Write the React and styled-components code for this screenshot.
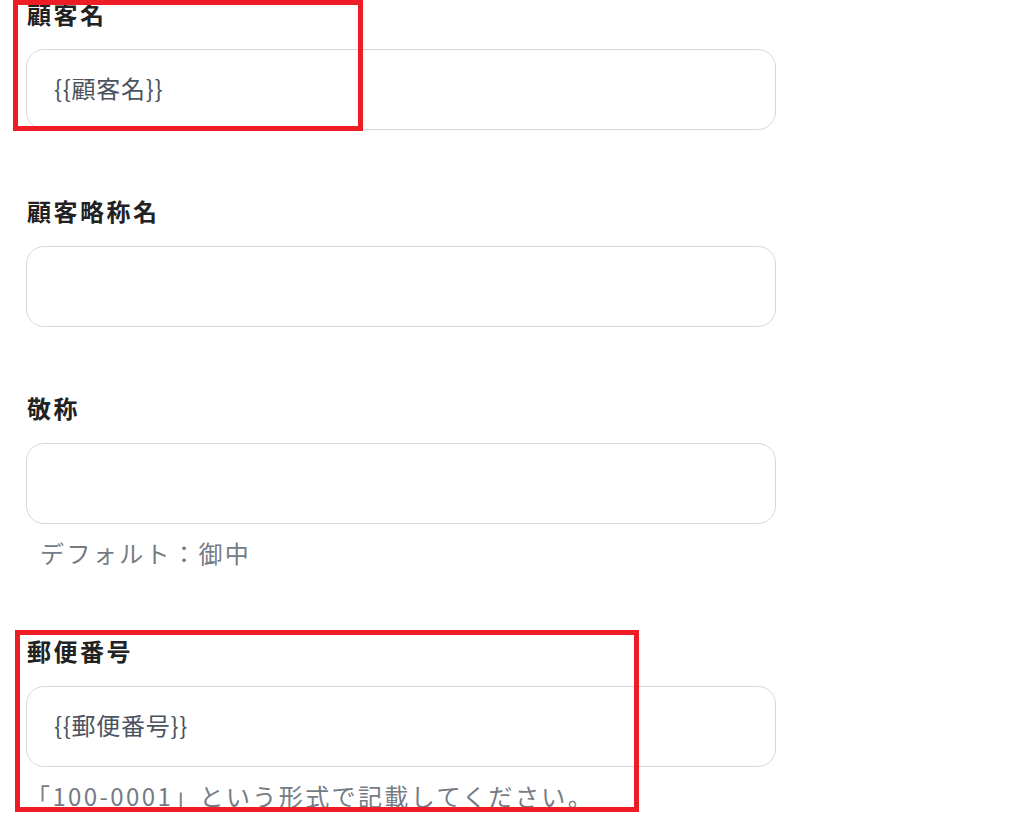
import React from 'react'
import styled, { createGlobalStyle } from 'styled-components'

const GlobalStyle = createGlobalStyle`
  html, body {
    margin: 0;
    padding: 0;
    background: #ffffff;
    overflow: hidden;
  }
  body {
    font-family: "Noto Sans CJK JP", "Noto Sans", sans-serif;
  }
`

const Page = styled.div`
  position: relative;
  width: 1029px;
  height: 814px;
  overflow: hidden;
`

const Form = styled.form`
  display: flex;
  flex-direction: column;
  gap: 64px;
  width: 750px;
  margin-top: -3px;
  padding-left: 26px;
`

const Field = styled.div`
  display: flex;
  flex-direction: column;
`

const Label = styled.label`
  font-size: 24px;
  line-height: 34px;
  font-weight: 700;
  letter-spacing: 2.5px;
  color: #222222;
  padding-left: 1px;
  margin-bottom: 18px;
`

const Input = styled.input`
  box-sizing: border-box;
  width: 750px;
  height: 81px;
  padding: 0 0 4px 27px;
  border: 1px solid #d4d7dd;
  border-radius: 18px;
  background: #ffffff;
  font-family: "Noto Sans CJK JP", "Noto Sans", sans-serif;
  font-size: 24px;
  letter-spacing: 0.7px;
  color: #4b5360;
  outline: none;
`

const Help = styled.p`
  margin: 12px 0 0;
  padding-left: ${p => p.$indent ?? 14}px;
  font-size: 24px;
  line-height: 34px;
  letter-spacing: 2.4px;
  color: #757b84;
`

const Marker = styled.div`
  position: absolute;
  box-sizing: border-box;
  border: 5px solid #ee1c25;
  pointer-events: none;
`

const fields = [
  { label: '顧客名', value: '{{顧客名}}' },
  { label: '顧客略称名', value: '' },
  { label: '敬称', value: '', help: 'デフォルト：御中' },
  { label: '郵便番号', value: '{{郵便番号}}', help: '「100-0001」という形式で記載してください。', indent: 0 },
]

export default function App() {
  return (
    <Page>
      <GlobalStyle />
      <Form onSubmit={e => e.preventDefault()}>
        {fields.map(f => (
          <Field key={f.label}>
            <Label>{f.label}</Label>
            <Input type="text" defaultValue={f.value} readOnly />
            {f.help && <Help $indent={f.indent}>{f.help}</Help>}
          </Field>
        ))}
      </Form>
      <Marker style={{ left: 13, top: 0, width: 350, height: 131 }} />
      <Marker style={{ left: 15, top: 630, width: 624, height: 182 }} />
    </Page>
  )
}
